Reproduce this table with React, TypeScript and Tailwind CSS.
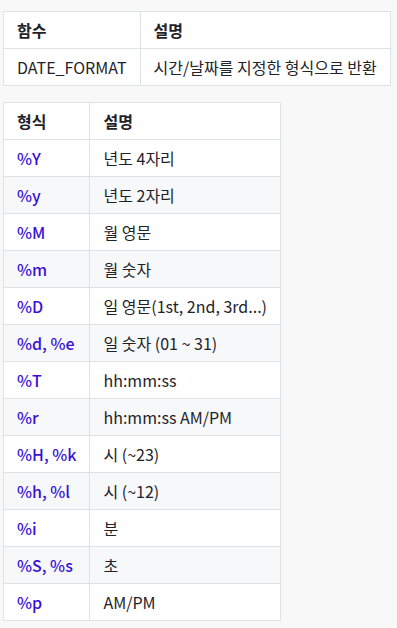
const formats: [string, string][] = [
  ['%Y', '년도 4자리'],
  ['%y', '년도 2자리'],
  ['%M', '월 영문'],
  ['%m', '월 숫자'],
  ['%D', '일 영문(1st, 2nd, 3rd...)'],
  ['%d, %e', '일 숫자 (01 ~ 31)'],
  ['%T', 'hh:mm:ss'],
  ['%r', 'hh:mm:ss AM/PM'],
  ['%H, %k', '시 (~23)'],
  ['%h, %l', '시 (~12)'],
  ['%i', '분'],
  ['%S, %s', '초'],
  ['%p', 'AM/PM'],
];

const cell = 'border border-[#dfe2e5] px-[13px] py-[6px] text-left';

export default function App() {
  return (
    <div
      className="min-h-screen bg-[#f8f8f8] pt-[11px] pl-[3px] text-[16px] leading-[24px] text-[#1f2328]"
      style={{ fontFamily: '"Noto Sans CJK KR", "Noto Sans", sans-serif' }}
    >
      <table className="mb-[16px] border-collapse bg-white">
        <thead>
          <tr>
            <th className={`${cell} font-semibold`}>함수</th>
            <th className={`${cell} font-semibold`}>설명</th>
          </tr>
        </thead>
        <tbody>
          <tr>
            <td className={cell}>DATE_FORMAT</td>
            <td className={cell}>시간/날짜를 지정한 형식으로 반환</td>
          </tr>
        </tbody>
      </table>

      <table className="border-collapse bg-white">
        <thead>
          <tr>
            <th className={`${cell} font-semibold`}>형식</th>
            <th className={`${cell} font-semibold`}>설명</th>
          </tr>
        </thead>
        <tbody>
          {formats.map(([code, desc], i) => (
            <tr key={code} className={i % 2 === 1 ? 'bg-[#f6f8fa]' : 'bg-white'}>
              <td className={`${cell} font-medium text-[#3a10d6]`}>{code}</td>
              <td className={cell}>{desc}</td>
            </tr>
          ))}
        </tbody>
      </table>
    </div>
  );
}
